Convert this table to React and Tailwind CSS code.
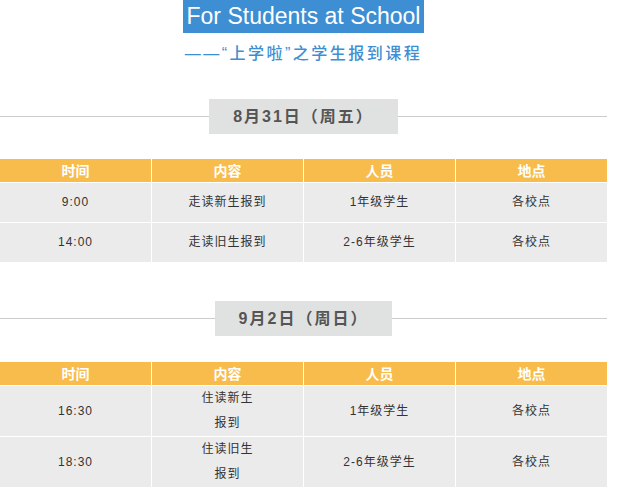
const font = { fontFamily: '"Liberation Sans", "Noto Sans CJK SC", sans-serif' };

const day1 = [
  { time: '9:00', what: ['走读新生报到'], who: '1年级学生', where: '各校点' },
  { time: '14:00', what: ['走读旧生报到'], who: '2-6年级学生', where: '各校点' },
];

const day2 = [
  { time: '16:30', what: ['住读新生', '报到'], who: '1年级学生', where: '各校点' },
  { time: '18:30', what: ['住读旧生', '报到'], who: '2-6年级学生', where: '各校点' },
];

function DateBar({ children }) {
  return (
    <div className="flex items-center">
      <div className="flex-1 h-px bg-[#cccccc]" />
      <div className="h-[35px] px-6 flex items-center bg-[#e0e2e1] text-[#555] text-base font-bold tracking-[2px]">
        {children}
      </div>
      <div className="flex-1 h-px bg-[#cccccc]" />
    </div>
  );
}

function Schedule({ rows, rowH }) {
  return (
    <div className="grid grid-cols-4 gap-px bg-white">
      {['时间', '内容', '人员', '地点'].map((h) => (
        <div key={h} className="h-[23px] bg-[#f8bc4c] text-white text-sm font-bold flex items-center justify-center">
          {h}
        </div>
      ))}
      {rows.map((r) => (
        <Row key={r.time} r={r} rowH={rowH} />
      ))}
    </div>
  );
}

function Row({ r, rowH }) {
  const cell = `${rowH} bg-[#ebebeb] text-xs text-[#333] tracking-[1px] flex flex-col items-center justify-center leading-[25px]`;
  return (
    <>
      <div className={cell}>{r.time}</div>
      <div className={cell}>
        {r.what.map((w) => <span key={w}>{w}</span>)}
      </div>
      <div className={cell}>{r.who}</div>
      <div className={cell}>{r.where}</div>
    </>
  );
}

export default function App() {
  return (
    <div className="w-[607px] bg-white" style={font}>
      <div className="flex justify-center">
        <div className="h-[33px] w-[241px] bg-[#3d8ed2] text-white text-[23px] leading-none flex items-center justify-center">
          For Students at School
        </div>
      </div>
      <div className="mt-[11px] leading-[20px] text-center text-base font-medium text-[#3d8ed2] tracking-[2.5px]">
        ——“上学啦”之学生报到课程
      </div>

      <div className="mt-[35px]">
        <DateBar>8月31日（周五）</DateBar>
      </div>
      <div className="mt-[25px]">
        <Schedule rows={day1} rowH="h-[39px]" />
      </div>

      <div className="mt-[39px]">
        <DateBar>9月2日（周日）</DateBar>
      </div>
      <div className="mt-[26px]">
        <Schedule rows={day2} rowH="h-[50px]" />
      </div>
    </div>
  );
}
